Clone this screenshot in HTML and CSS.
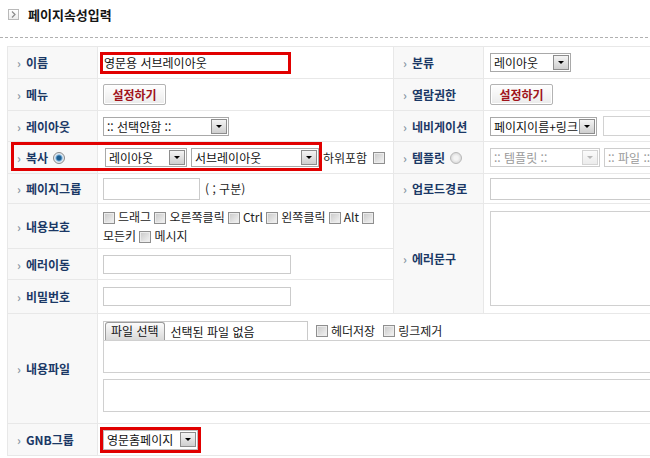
FILE: index.html
```html
<!DOCTYPE html>
<html lang="ko">
<head>
<meta charset="utf-8">
<title>페이지속성입력</title>
<link rel="stylesheet" href="styles.css">
</head>
<body>
<div class="page">
<div class="head">
  <span class="ticon"><svg width="5" height="7" viewBox="0 0 5 7"><path d="M1 0.5 L4 3.5 L1 6.5" fill="none" stroke="#8a8a8a" stroke-width="1.2"/></svg></span>
  <h1>페이지속성입력</h1>
</div>
<div class="dash"></div>
<table class="form">
  <colgroup><col class="c1"><col class="c2"><col class="c3"><col class="c4"></colgroup>
  <tr class="r1">
    <th>이름</th>
    <td><span class="hl"><input class="txt inhl" value="영문용 서브레이아웃"></span></td>
    <th>분류</th>
    <td class="rv"><div class="line"><span class="sel w81"><span class="st">레이아웃</span><i class="arr"></i></span></div></td>
  </tr>
  <tr class="r2">
    <th>메뉴</th>
    <td><span class="btn">설정하기</span></td>
    <th>열람권한</th>
    <td class="rv"><span class="btn">설정하기</span></td>
  </tr>
  <tr class="r3">
    <th>레이아웃</th>
    <td><div class="line"><span class="sel w126"><span class="st">:: 선택안함 ::</span><i class="arr"></i></span></div></td>
    <th>네비게이션</th>
    <td class="rv"><div class="line g6"><span class="sel w107"><span class="st">페이지이름+링크</span><i class="arr"></i></span><span class="txt dis w120"></span></div></td>
  </tr>
  <tr class="r4">
    <th class="rel">복사 <span class="rad on"></span><span class="ovl"></span></th>
    <td><div class="line g4 ml2"><span class="sel w82"><span class="st">레이아웃</span><i class="arr"></i></span><span class="sel w128"><span class="st">서브레이아웃</span><i class="arr"></i></span><span class="after">하위포함</span><span class="cb"></span></div></td>
    <th>템플릿 <span class="rad off"></span></th>
    <td class="rv"><div class="line g4"><span class="sel dsel w110"><span class="st">:: 템플릿 ::</span><i class="arr"></i></span><span class="sel dsel w110"><span class="st">:: 파일 ::</span><i class="arr"></i></span></div></td>
  </tr>
  <tr class="r5">
    <th>페이지그룹</th>
    <td><div class="line g5"><span class="txt w97"></span><span>( ; 구분)</span></div></td>
    <th>업로드경로</th>
    <td class="rv"><div class="line"><span class="txt tall w240"></span></div></td>
  </tr>
  <tr class="r6">
    <th>내용보호</th>
    <td class="prot"><span class="cb"></span>드래그 <span class="cb"></span>오른쪽클릭 <span class="cb"></span>Ctrl <span class="cb"></span>왼쪽클릭 <span class="cb"></span>Alt <span class="cb"></span><br>모든키 <span class="cb"></span>메시지</td>
    <th rowspan="3">에러문구</th>
    <td class="rv" rowspan="3"><div class="area"></div></td>
  </tr>
  <tr class="r7">
    <th>에러이동</th>
    <td><div class="line"><span class="txt w188"></span></div></td>
  </tr>
  <tr class="r8">
    <th>비밀번호</th>
    <td><div class="line"><span class="txt w188"></span></div></td>
  </tr>
  <tr class="r9">
    <th>내용파일</th>
    <td colspan="3" class="files">
      <div class="frow">
        <div class="file"><span class="fbtn">파일 선택</span><span class="ftxt">선택된 파일 없음</span></div>
        <span class="cb"></span><span>헤더저장</span><span class="cb"></span><span>링크제거</span>
      </div>
      <div class="ta"></div>
      <div class="ta ta2"></div>
    </td>
  </tr>
  <tr class="r10">
    <th>GNB그룹</th>
    <td colspan="3"><span class="hl"><span class="sel w95 nob"><span class="st">영문홈페이지</span><i class="arr"></i></span></span></td>
  </tr>
</table>
</div>
</body>
</html>
```
FILE: styles.css
```css
* { box-sizing: border-box; }
html, body { margin: 0; padding: 0; overflow: hidden; }
body {
  width: 650px; height: 458px; background: #fff;
  font-family: "Noto Sans CJK KR", "Noto Sans", sans-serif;
  font-size: 12px; color: #222;
}
.page { width: 650px; height: 458px; overflow: hidden; }
.head { height: 37px; display: flex; align-items: flex-start; padding: 9px 0 0 8px; gap: 9px; }
.ticon {
  width: 11px; height: 11px; border: 1px solid #b9b9b9;
  background: linear-gradient(#fff, #ececec);
  display: flex; align-items: center; justify-content: center;
}
.head h1 { margin: 0; font-size: 13px; line-height: 13px; font-weight: bold; color: #151515; margin-top: -1px; }
.dash { height: 1px; background: repeating-linear-gradient(90deg, #b0b0b0 0 3px, transparent 3px 5px); }

.form {
  margin: 8px 0 0 7px; border-collapse: collapse; table-layout: fixed;
  width: 760px; border: 1px solid #dedede;
}
col.c1 { width: 90px; } col.c2 { width: 296px; } col.c3 { width: 90px; } col.c4 { width: 284px; }
th, td { border: 1px solid #e8e8e8; padding: 0; vertical-align: middle; }
th {
  background: #f8f8f8; text-align: left; padding-left: 9px;
  font-weight: bold; color: #1b3866; white-space: nowrap; font-size: 12px;
}
th::before { content: "›"; display: inline-block; width: 9px; color: #8b98a6; font-weight: bold; }
td { padding-left: 5px; }
td.rv { padding-left: 6px; }
.rel { position: relative; }
.ovl {
  position: absolute; left: 3px; top: 0px; width: 311px; height: 29px;
  border: 3px solid #e10000; pointer-events: none;
}
tr.r1 { height: 32px; } tr.r2 { height: 32px; } tr.r3 { height: 31px; } tr.r4 { height: 32px; }
tr.r5 { height: 30px; } tr.r6 { height: 45px; } tr.r7 { height: 31px; } tr.r8 { height: 34px; }
tr.r9 { height: 110px; } tr.r10 { height: 32px; }

.line { display: flex; align-items: center; }
.g4 { gap: 4px; } .g5 { gap: 5px; } .g6 { gap: 6px; }
.ml2 { margin-left: 2px; }

.hl { display: inline-flex; border: 3px solid #e10000; margin-left: -3px; vertical-align: middle; }
.txt {
  display: inline-block; height: 19px; border: 1px solid #cbcbcb; background: #fff;
  font: inherit; font-size: 12px; vertical-align: middle; padding: 0 2px;
}
.txt.tall { height: 22px; }
.inhl { border: none; width: 185px; height: 16px; line-height: 16px; padding: 0 1px; outline: none; color: #111; }
.dis { border-color: #d2d2d2; height: 20px; }
.w97 { width: 97px; height: 22px; }
.w188 { width: 188px; }
.w240 { width: 240px; }
.w120 { width: 120px; }

.sel {
  display: inline-flex; align-items: center; height: 19px; border: 1px solid #a9a9a9;
  background: #fff; padding: 0 1px 0 3px; vertical-align: middle; color: #111;
}
.sel.nob { border-color: #bdbdbd; height: 20px; }
.sel .st { flex: 1; white-space: nowrap; overflow: hidden; line-height: 17px; }
.arr {
  width: 16px; height: 15px; border: 1px solid #8d8d8d;
  background: linear-gradient(#f4f4f4, #cfcfcf);
  display: flex; align-items: center; justify-content: center; flex: none;
}
.arr::after {
  content: ""; border-left: 3px solid transparent; border-right: 3px solid transparent;
  border-top: 3px solid #000;
}
.dsel { border-color: #cdcdcd; color: #9a9a9a; }
.dsel .arr { border-color: #d4d4d4; background: linear-gradient(#fbfbfb, #ececec); }
.dsel .arr::after { border-top-color: #b8b8b8; }
.w81 { width: 81px; } .w82 { width: 82px; } .w95 { width: 95px; }
.w107 { width: 107px; } .w110 { width: 110px; } .w126 { width: 126px; } .w128 { width: 128px; }
.after { margin-left: 0; margin-right: 2px; }

.btn {
  display: inline-flex; align-items: center; justify-content: center;
  width: 63px; height: 21px; border: 1px solid #b3b3b3; border-radius: 2px;
  background: linear-gradient(#ffffff, #ebebeb); box-shadow: inset 0 0 0 1px #fff;
  color: #a0141c; font-weight: bold; vertical-align: middle;
}

.cb {
  display: inline-block; width: 12px; height: 12px; border: 1px solid #8f8f8f;
  background: linear-gradient(135deg, #c8c8c8, #f4f4f4);
  box-shadow: inset 0 0 0 1px #ececec; vertical-align: -2px; margin-right: 3px;
}
.rad {
  display: inline-block; width: 12px; height: 12px; border-radius: 50%;
  vertical-align: -1px; margin-left: 2px;
}
.rad.on { border: 1px solid #8c8c8c; background: radial-gradient(circle, #1d5d8f 0 2px, #6fa9d6 3px, #dfe8f0 4px); }
.rad.off { border: 1px solid #b9b9b9; background: radial-gradient(circle, #f4f4f4 0 2px, #dcdcdc 5px); }

.prot { line-height: 19px; padding-top: 0; }

.area { width: 240px; height: 95px; border: 1px solid #d0d0d0; background: #fff; }

.files { vertical-align: top; padding-top: 7px; }
.frow { display: flex; align-items: center; height: 19px; }
.frow .cb { margin-left: 8px; margin-right: 3px; }
.file {
  display: flex; align-items: flex-end; width: 205px; height: 19px;
  border: 1px solid #cacaca; border-bottom: none;
}
.fbtn {
  height: 18px; padding: 0 5px; border: 1px solid #9c9c9c; border-bottom: none;
  border-radius: 3px 3px 0 0; background: linear-gradient(#fbfbfb, #d9d9d9);
  line-height: 16px; margin-left: 1px; color: #111;
}
.ftxt { margin-left: 6px; line-height: 17px; color: #111; }
.ta { width: 600px; height: 33px; border: 1px solid #d0d0d0; background: #fff; }
.ta2 { margin-top: 6px; }
```
